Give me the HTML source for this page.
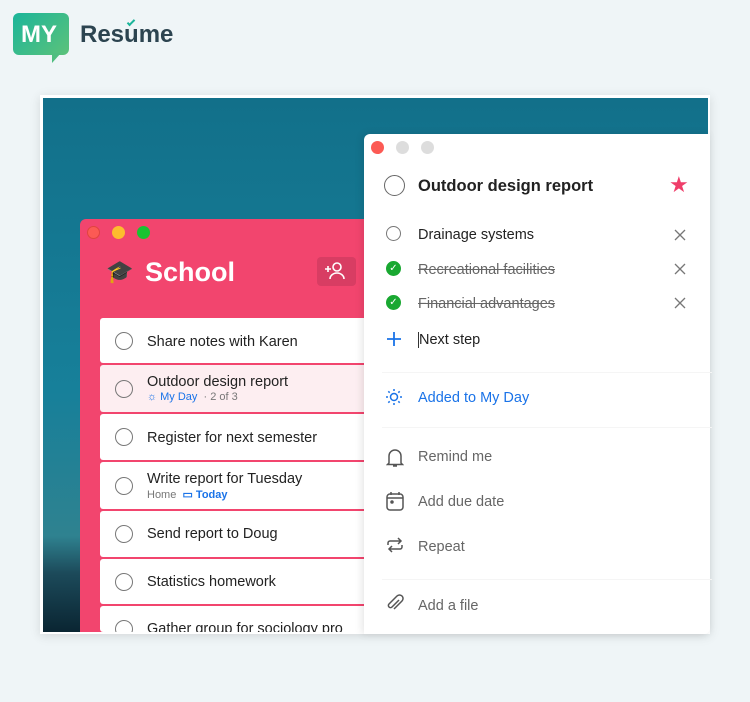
<!DOCTYPE html>
<html><head><meta charset="utf-8"><style>
*{margin:0;padding:0;box-sizing:border-box}
body{width:750px;height:702px;background:#eff5f7;font-family:"Liberation Sans",sans-serif;position:relative;overflow:hidden}
.abs{position:absolute}
.frame{left:40px;top:95px;width:670px;height:539px;background:#fff;box-shadow:0 2px 10px rgba(0,0,0,.12)}
.sky{left:43px;top:98px;width:665px;height:534px;background:linear-gradient(180deg,#12708a 0%,#17809a 55%,#2f8290 82%,#1c4a5a 89%,#0a2532 100%);overflow:hidden}
.pink{left:80px;top:219px;width:290px;height:413px;background:#f2456e;border-radius:6px 0 0 0}
.dot{position:absolute;width:13px;height:13px;border-radius:50%}
.card{position:absolute;left:100px;width:270px;background:#fff;border-radius:3px 0 0 3px}
.circ{position:absolute;left:15px;width:18px;height:18px;border:1.5px solid #777;border-radius:50%}
.t{position:absolute;left:47px;font-size:14.5px;color:#222}
.sub{position:absolute;left:47px;font-size:11px;color:#777}
.panel{left:364px;top:134px;width:346px;height:500px;background:#fff;border-radius:6px 0 6px 0;box-shadow:-2px 0 8px rgba(0,0,0,.1)}
.p{position:absolute;font-size:14.5px;color:#222}
.g{color:#666}
.x{position:absolute;left:310px}
</style></head><body>
<div class="abs" style="left:13px;top:13px;width:56px;height:42px;border-radius:6px;background:linear-gradient(135deg,#1bb59a,#5cc27a)"></div>
<div class="abs" style="left:52px;top:53px;width:0;height:0;border-left:9px solid #50be80;border-bottom:10px solid transparent"></div>
<div class="abs" style="left:21px;top:21px;font-size:24px;font-weight:bold;color:#fff">MY</div>
<div class="abs" style="left:80px;top:21px;font-size:24px;font-weight:bold;color:#2c4450">Resume</div>
<div class="abs" style="left:127px;top:20px;width:8px;height:4px;border-left:2px solid #1bb59a;border-bottom:2px solid #1bb59a;transform:rotate(-45deg)"></div>
<div class="abs frame"></div>
<div class="abs sky"></div>
<div class="abs pink">
 <div class="dot" style="left:7px;top:7px;background:#fc5a54;border:1px solid #e0443e"></div>
 <div class="dot" style="left:32px;top:7px;background:#fdbc2e"></div>
 <div class="dot" style="left:57px;top:7px;background:#19c331"></div>
 <div style="position:absolute;left:26px;top:40px;font-size:22px">🎓</div>
 <div style="position:absolute;left:65px;top:38px;font-size:27px;font-weight:bold;color:#fff">School</div>
 <div style="position:absolute;left:237px;top:38px;width:39px;height:29px;background:#d83d63;border-radius:4px"><svg width="39" height="29" viewBox="0 0 39 29" fill="none" stroke="#fff" stroke-width="1.6"><path d="M8 12h6M11 9v6"/><circle cx="20" cy="10" r="4"/><path d="M13 22a7 6 0 0 1 14 0"/></svg></div>
</div>
<div class="card" style="top:318px;height:45px"><div class="circ" style="top:14px"></div><div class="t" style="top:16px">Share notes with Karen</div></div>
<div class="card" style="top:365px;height:47px;background:#fdeef1"><div class="circ" style="top:15px"></div><div class="t" style="top:9px">Outdoor design report</div><div class="sub" style="top:26px"><span style="color:#1a73e8">☼ My Day</span> &nbsp;· 2 of 3</div></div>
<div class="card" style="top:414px;height:46px"><div class="circ" style="top:14px"></div><div class="t" style="top:16px">Register for next semester</div></div>
<div class="card" style="top:462px;height:47px"><div class="circ" style="top:15px"></div><div class="t" style="top:9px">Write report for Tuesday</div><div class="sub" style="top:26px">Home &nbsp;<span style="color:#1a73e8;font-weight:bold">▭ Today</span></div></div>
<div class="card" style="top:511px;height:46px"><div class="circ" style="top:14px"></div><div class="t" style="top:15px">Send report to Doug</div></div>
<div class="card" style="top:559px;height:45px"><div class="circ" style="top:14px"></div><div class="t" style="top:15px">Statistics homework</div></div>
<div class="card" style="top:606px;height:26px;overflow:hidden"><div class="circ" style="top:14px"></div><div class="t" style="top:15px">Gather group for sociology pro</div></div>
<div class="abs panel">
 <div class="dot" style="left:7px;top:7px;background:#fc5a54"></div>
 <div class="dot" style="left:32px;top:7px;background:#ddd"></div>
 <div class="dot" style="left:57px;top:7px;background:#ddd"></div>
 <div style="position:absolute;left:20px;top:41px;width:21px;height:21px;border:1.5px solid #666;border-radius:50%"></div>
 <div class="p" style="left:54px;top:43px;font-size:16.5px;font-weight:bold">Outdoor design report</div>
 <div style="position:absolute;left:305px;top:38px;font-size:22px;color:#ef3e6a">★</div>
 <div style="position:absolute;left:22px;top:92px;width:15px;height:15px;border:1.5px solid #777;border-radius:50%"></div>
 <div class="p" style="left:54px;top:93px">Drainage systems</div>
 <svg class="x" style="top:95px" width="12" height="12" stroke="#777" stroke-width="1.3"><path d="M1 1l10 10M11 1L1 11"/></svg>
 <div style="position:absolute;left:22px;top:127px;width:15px;height:15px;background:#19a831;border-radius:50%;color:#fff;font-size:10px;text-align:center;line-height:15px">✓</div>
 <div class="p g" style="left:54px;top:128px;text-decoration:line-through">Recreational facilities</div>
 <svg class="x" style="top:129px" width="12" height="12" stroke="#777" stroke-width="1.3"><path d="M1 1l10 10M11 1L1 11"/></svg>
 <div style="position:absolute;left:22px;top:161px;width:15px;height:15px;background:#19a831;border-radius:50%;color:#fff;font-size:10px;text-align:center;line-height:15px">✓</div>
 <div class="p g" style="left:54px;top:162px;text-decoration:line-through">Financial advantages</div>
 <svg class="x" style="top:163px" width="12" height="12" stroke="#777" stroke-width="1.3"><path d="M1 1l10 10M11 1L1 11"/></svg>
 <svg style="position:absolute;left:22px;top:197px" width="16" height="16" stroke="#1a73e8" stroke-width="1.8"><path d="M8 1v14M1 8h14"/></svg>
 <div class="p" style="left:54px;top:198px;border-left:1px solid #333">Next step</div>
 <div style="position:absolute;left:18px;top:238px;width:330px;border-top:1px solid #f5f5f5"></div>
 <svg style="position:absolute;left:21px;top:254px" width="18" height="18" viewBox="0 0 18 18" fill="none" stroke="#1a73e8" stroke-width="1.5"><circle cx="9" cy="9" r="3.5"/><path d="M9 1v2M9 15v2M1 9h2M15 9h2M3.3 3.3l1.4 1.4M13.3 13.3l1.4 1.4M3.3 14.7l1.4-1.4M13.3 4.7l1.4-1.4"/></svg>
 <div class="p" style="left:54px;top:256px;color:#1a73e8">Added to My Day</div>
 <div style="position:absolute;left:18px;top:293px;width:330px;border-top:1px solid #f5f5f5"></div>
 <svg style="position:absolute;left:22px;top:314px" width="18" height="20" viewBox="0 0 18 20" fill="none" stroke="#555" stroke-width="1.5"><path d="M3 15V8a6 6 0 0 1 12 0v7l1.5 1.5h-15z M7 18h4"/></svg>
 <div class="p g" style="left:54px;top:315px">Remind me</div>
 <svg style="position:absolute;left:22px;top:357px" width="18" height="20" viewBox="0 0 18 20" fill="none" stroke="#555" stroke-width="1.5"><rect x="1" y="3" width="16" height="16" rx="3"/><path d="M5 1v3M13 1v3M1 7h16"/><circle cx="6" cy="11" r="1" fill="#555"/></svg>
 <div class="p g" style="left:54px;top:360px">Add due date</div>
 <svg style="position:absolute;left:22px;top:403px" width="18" height="16" viewBox="0 0 18 16" fill="none" stroke="#555" stroke-width="1.5"><path d="M2 8V6a2 2 0 0 1 2-2h11M12 1l3 3-3 3M16 8v2a2 2 0 0 1-2 2H3M6 15l-3-3 3-3"/></svg>
 <div class="p g" style="left:54px;top:405px">Repeat</div>
 <div style="position:absolute;left:18px;top:445px;width:330px;border-top:1px solid #f5f5f5"></div>
 <svg style="position:absolute;left:22px;top:460px" width="18" height="20" viewBox="0 0 18 20" fill="none" stroke="#555" stroke-width="1.5"><path d="M13 6l-7 7a2 2 0 0 1-3-3l8-8a3.5 3.5 0 0 1 5 5l-8 8"/></svg>
 <div class="p g" style="left:54px;top:464px">Add a file</div>
</div>
</body></html>
